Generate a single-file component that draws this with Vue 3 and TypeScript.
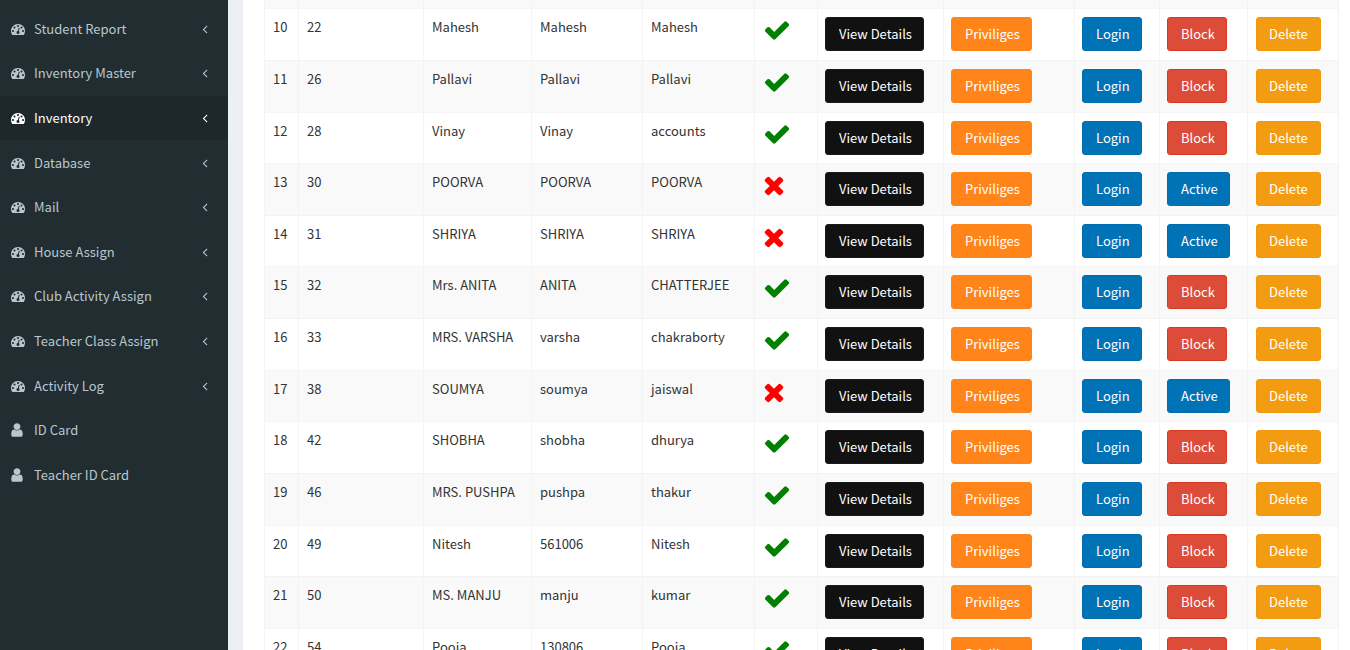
<script setup lang="ts">
interface MenuItem {
  label: string
  icon: 'dashboard' | 'user'
  arrow: boolean
  active?: boolean
}

interface Teacher {
  no: number
  id: number
  title: string
  first: string
  last: string
  allowed: boolean
}

const menu: MenuItem[] = [
  { label: 'Student Report', icon: 'dashboard', arrow: true },
  { label: 'Inventory Master', icon: 'dashboard', arrow: true },
  { label: 'Inventory', icon: 'dashboard', arrow: true, active: true },
  { label: 'Database', icon: 'dashboard', arrow: true },
  { label: 'Mail', icon: 'dashboard', arrow: true },
  { label: 'House Assign', icon: 'dashboard', arrow: true },
  { label: 'Club Activity Assign', icon: 'dashboard', arrow: true },
  { label: 'Teacher Class Assign', icon: 'dashboard', arrow: true },
  { label: 'Activity Log', icon: 'dashboard', arrow: true },
  { label: 'ID Card', icon: 'user', arrow: false },
  { label: 'Teacher ID Card', icon: 'user', arrow: false }
]

const rows: Teacher[] = [
  { no: 10, id: 22, title: 'Mahesh', first: 'Mahesh', last: 'Mahesh', allowed: true },
  { no: 11, id: 26, title: 'Pallavi', first: 'Pallavi', last: 'Pallavi', allowed: true },
  { no: 12, id: 28, title: 'Vinay', first: 'Vinay', last: 'accounts', allowed: true },
  { no: 13, id: 30, title: 'POORVA', first: 'POORVA', last: 'POORVA', allowed: false },
  { no: 14, id: 31, title: 'SHRIYA', first: 'SHRIYA', last: 'SHRIYA', allowed: false },
  { no: 15, id: 32, title: 'Mrs. ANITA', first: 'ANITA', last: 'CHATTERJEE', allowed: true },
  { no: 16, id: 33, title: 'MRS. VARSHA', first: 'varsha', last: 'chakraborty', allowed: true },
  { no: 17, id: 38, title: 'SOUMYA', first: 'soumya', last: 'jaiswal', allowed: false },
  { no: 18, id: 42, title: 'SHOBHA', first: 'shobha', last: 'dhurya', allowed: true },
  { no: 19, id: 46, title: 'MRS. PUSHPA', first: 'pushpa', last: 'thakur', allowed: true },
  { no: 20, id: 49, title: 'Nitesh', first: '561006', last: 'Nitesh', allowed: true },
  { no: 21, id: 50, title: 'MS. MANJU', first: 'manju', last: 'kumar', allowed: true },
  { no: 22, id: 54, title: 'Pooja', first: '130806', last: 'Pooja', allowed: true }
]

const dashboardPath =
  'M384 1152q0-53-37.5-90.5t-90.5-37.5-90.5 37.5-37.5 90.5 37.5 90.5 90.5 37.5 90.5-37.5 37.5-90.5zm192-448q0-53-37.5-90.5t-90.5-37.5-90.5 37.5-37.5 90.5 37.5 90.5 90.5 37.5 90.5-37.5 37.5-90.5zm428 481l101-382q6-26-7.5-48.5t-38.5-29.5-48 6.5-30 39.5l-101 382q-60 5-107 43.5t-63 98.5q-20 77 20 146t117 89 146-20 89-117q16-60-6-117t-72-91zm660-33q0-53-37.5-90.5t-90.5-37.5-90.5 37.5-37.5 90.5 37.5 90.5 90.5 37.5 90.5-37.5 37.5-90.5zm-640-640q0-53-37.5-90.5t-90.5-37.5-90.5 37.5-37.5 90.5 37.5 90.5 90.5 37.5 90.5-37.5 37.5-90.5zm448 192q0-53-37.5-90.5t-90.5-37.5-90.5 37.5-37.5 90.5 37.5 90.5 90.5 37.5 90.5-37.5 37.5-90.5zm320 448q0 261-141 483-19 29-54 29h-1402q-35 0-54-29-141-221-141-483 0-182 71-348t191-286 286-191 348-71 348 71 286 191 191 286 71 348z'
const userPath =
  'M1536 1399q0 109-62.5 187t-150.5 78h-854q-88 0-150.5-78t-62.5-187q0-85 8.5-160.5t31.5-152 58.5-131 94-89 134.5-34.5q131 128 313 128t313-128q76 0 134.5 34.5t94 89 58.5 131 31.5 152 8.5 160.5zm-256-887q0 159-112.5 271.5t-271.5 112.5-271.5-112.5-112.5-271.5 112.5-271.5 271.5-112.5 271.5 112.5 112.5 271.5z'
const anglePath =
  'M1203 544q0 13-10 23l-393 393 393 393q10 10 10 23t-10 23l-50 50q-10 10-23 10t-23-10l-466-466q-10-10-10-23t10-23l466-466q10-10 23-10t23 10l50 50q10 10 10 23z'
const checkPath =
  'M1671 566q0 40-28 68l-724 724-136 136q-28 28-68 28t-68-28l-136-136-362-362q-28-28-28-68t28-68l136-136q28-28 68-28t68 28l294 295 656-657q28-28 68-28t68 28l136 136q28 28 28 68z'
const timesPath =
  'M1490 1322q0 40-28 68l-136 136q-28 28-68 28t-68-28l-294-294-294 294q-28 28-68 28t-68-28l-136-136q-28-28-28-68t28-68l294-294-294-294q-28-28-28-68t28-68l136-136q28-28 68-28t68 28l294 294 294-294q28-28 68-28t68 28l136 136q28 28 28 68t-28 68l-294 294 294 294q28 28 28 68z'
</script>

<template>
  <div class="page">
    <aside class="sidebar">
      <a v-for="item in menu" :key="item.label" class="nav-item" :class="{ active: item.active }">
        <svg class="nav-icon" :class="item.icon" viewBox="0 0 1792 1792">
          <path :d="item.icon === 'dashboard' ? dashboardPath : userPath" />
        </svg>
        <span class="nav-label">{{ item.label }}</span>
        <svg v-if="item.arrow" class="nav-arrow" viewBox="0 0 1792 1792">
          <path :d="anglePath" />
        </svg>
      </a>
    </aside>

    <main class="content">
      <table class="data-table">
        <colgroup>
          <col class="c-no" />
          <col class="c-id" />
          <col class="c-title" />
          <col class="c-first" />
          <col class="c-last" />
          <col class="c-status" />
          <col class="c-view" />
          <col class="c-priv" />
          <col class="c-login" />
          <col class="c-block" />
          <col class="c-delete" />
        </colgroup>
        <tbody>
          <!-- tail of the row scrolled off above the fold -->
          <tr class="row-prev">
            <td v-for="n in 11" :key="n"></td>
          </tr>
          <tr v-for="row in rows" :key="row.no">
            <td>{{ row.no }}</td>
            <td>{{ row.id }}</td>
            <td>{{ row.title }}</td>
            <td>{{ row.first }}</td>
            <td>{{ row.last }}</td>
            <td>
              <svg class="status" :class="row.allowed ? 'ok' : 'no'" viewBox="0 0 1792 1792">
                <path :d="row.allowed ? checkPath : timesPath" />
              </svg>
            </td>
            <td><button class="btn btn-black">View Details</button></td>
            <td><button class="btn btn-orange">Priviliges</button></td>
            <td><button class="btn btn-blue">Login</button></td>
            <td>
              <button v-if="row.allowed" class="btn btn-red">Block</button>
              <button v-else class="btn btn-blue">Active</button>
            </td>
            <td class="cell-delete"><button class="btn btn-yellow">Delete</button></td>
          </tr>
        </tbody>
      </table>
    </main>
  </div>
</template>

<style>
html,
body {
  overflow: hidden;
  height: 650px;
}
</style>

<style scoped>
.page {
  display: flex;
  height: 650px;
  overflow: hidden;
  background: #ecf0f5;
  font-family: "Noto Sans CJK SC", "Source Sans Pro", sans-serif;
  font-size: 13px;
  line-height: 20px;
  color: #333;
}

.sidebar {
  width: 228px;
  flex: none;
  padding-top: 6.5px;
  background: #222d32;
}

.nav-item {
  display: flex;
  align-items: center;
  height: 44.6px;
  padding: 0 16px 0 10px;
  color: #b8c7ce;
  box-sizing: border-box;
}
.nav-item.active {
  background: #1e282c;
  color: #fff;
}

.nav-icon {
  fill: currentColor;
  flex: none;
}
.nav-icon.dashboard {
  width: 14px;
  height: 14px;
  margin-left: 1px;
}
.nav-icon.user {
  width: 16px;
  height: 16px;
  margin-left: -1px;
}
.nav-label {
  margin-left: 9px;
  flex: 1;
}
.nav-arrow {
  width: 14px;
  height: 14px;
  fill: currentColor;
  flex: none;
}

.content {
  flex: 1;
  min-width: 0;
  margin-left: 15px;
  background: #fff;
  padding-left: 21px;
}

.data-table {
  table-layout: fixed;
  width: 1074px;
  border-collapse: collapse;
}
.c-no { width: 34px; }
.c-id { width: 125px; }
.c-title { width: 108px; }
.c-first { width: 111px; }
.c-last { width: 112px; }
.c-status { width: 63px; }
.c-view { width: 126px; }
.c-priv { width: 131px; }
.c-login { width: 85px; }
.c-block { width: 88px; }
.c-delete { width: 91px; }

.data-table tr {
  height: 51.67px;
}
.data-table tr:nth-child(odd) {
  background: #f9f9f9;
}
.data-table tr.row-prev {
  height: 8.7px;
}
.data-table td {
  box-sizing: border-box;
  padding: 8px;
  border: 1px solid #f4f4f4;
  vertical-align: top;
}
.data-table .row-prev td {
  padding: 0;
  border-top: 0;
}

.status {
  display: block;
  width: 28px;
  height: 28px;
  margin-top: -1px;
}
.status.ok { fill: #008000; }
.status.no { fill: #ff0000; margin-left: -3px; }

.btn {
  display: block;
  margin-left: -1px;
  padding: 6px 12px 6px 13px;
  border: 1px solid transparent;
  border-radius: 3px;
  font: inherit;
  color: #fff;
  white-space: nowrap;
}
.btn-black { background: #111; border-color: #1a1a1a; padding-right: 11px; }
.btn-orange { background: #ff851b; border-color: #ff851b; padding-right: 11px; }
.btn-blue { background: #0073b7; border-color: #006dae; padding-right: 11px; }
.btn-red { background: #dd4b39; border-color: #d73925; padding-right: 11px; }
.btn-yellow { background: #f39c12; border-color: #f0990f; padding: 6px 12px; }

.cell-delete .btn {
  margin-left: 0;
}
</style>
